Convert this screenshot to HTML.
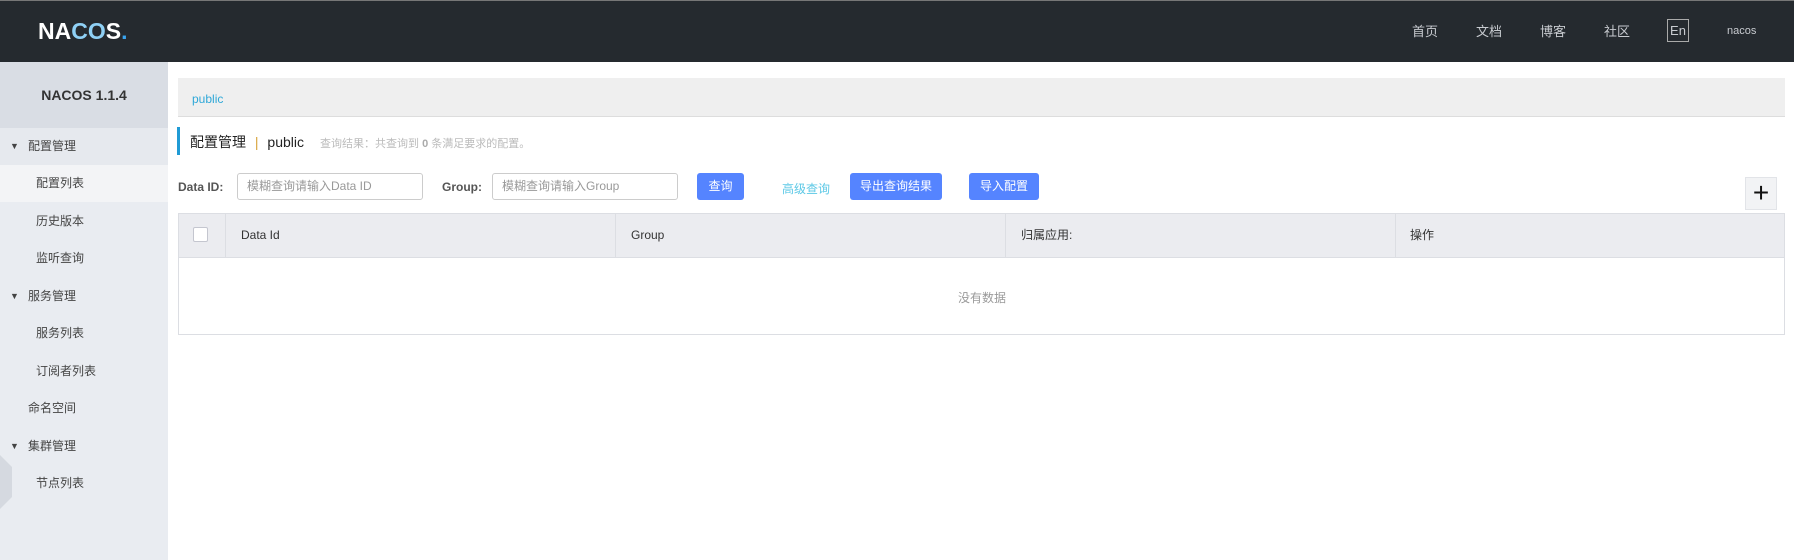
<!DOCTYPE html>
<html><head><meta charset="utf-8">
<style>
*{box-sizing:border-box;margin:0;padding:0}
body{width:1794px;height:560px;overflow:hidden;background:#fff;font-family:"Liberation Sans","Noto Sans CJK SC",sans-serif;font-size:12px;color:#333;position:relative}
.abs{position:absolute}
.hdr{left:0;top:0;width:1794px;height:62px;background:#252a2f;border-top:1px solid #777}
.logo{left:38px;top:18px;color:#fff;font-size:23px;font-weight:bold;letter-spacing:0px}
.nav{color:#c8cbd0;font-size:13px;top:21px}
.side{left:0;top:62px;width:168px;height:498px;background:#e9ecf1}
.ver{left:0;top:62px;width:168px;height:66px;background:#d9dde4;text-align:center;line-height:66px;font-weight:bold;font-size:14px;color:#333}
.it{left:0;width:168px;height:37px;line-height:37px;font-size:12px;color:#444}
.btn{background:#5584ff;color:#fff;border-radius:3px;text-align:center;line-height:27px;height:27px;top:173px;font-size:12px}
.inp{top:173px;height:27px;border:1px solid #ccc;border-radius:3px;padding-left:9px;line-height:25px;color:#999;font-size:12px}
.th{top:214px;height:43px;line-height:43px;font-size:12px;color:#333}
.vd{top:214px;width:1px;height:43px;background:#dcdee3}
</style></head><body>
<div class="abs hdr"></div>
<div class="abs logo">NA<span style="color:#8fd0f5">CO</span>S<span style="color:#3aa5f0">.</span></div>
<div class="abs nav" style="left:1412px">首页</div>
<div class="abs nav" style="left:1476px">文档</div>
<div class="abs nav" style="left:1540px">博客</div>
<div class="abs nav" style="left:1604px">社区</div>
<div class="abs nav" style="left:1667px;top:19px;border:1px solid #aaa;width:22px;height:23px;text-align:center;line-height:21px;font-size:13px">En</div>
<div class="abs nav" style="left:1727px;top:25px;font-size:11px">nacos</div>

<div class="abs side"></div>
<div class="abs ver">NACOS 1.1.4</div>
<div class="abs it" style="top:128px;background:#e6e9ee;padding-left:28px"><span class="abs" style="left:10px;top:0;font-size:9px">▼</span>配置管理</div>
<div class="abs it" style="top:165px;background:#f3f4f6;padding-left:36px">配置列表</div>
<div class="abs it" style="top:203px;padding-left:36px">历史版本</div>
<div class="abs it" style="top:240px;padding-left:36px">监听查询</div>
<div class="abs it" style="top:278px;padding-left:28px"><span class="abs" style="left:10px;top:0;font-size:9px">▼</span>服务管理</div>
<div class="abs it" style="top:315px;padding-left:36px">服务列表</div>
<div class="abs it" style="top:353px;padding-left:36px">订阅者列表</div>
<div class="abs it" style="top:390px;padding-left:28px">命名空间</div>
<div class="abs it" style="top:428px;padding-left:28px"><span class="abs" style="left:10px;top:0;font-size:9px">▼</span>集群管理</div>
<div class="abs it" style="top:465px;padding-left:36px">节点列表</div>
<svg class="abs" style="left:0;top:455px" width="14" height="55"><polygon points="0,0 12,12 12,42 0,54" fill="#d5d9e0"/></svg>

<div class="abs" style="left:178px;top:78px;width:1607px;height:39px;background:#efefef;border-bottom:1px solid #ddd"></div>
<div class="abs" style="left:192px;top:92px;color:#2fa8d8;font-size:12px">public</div>
<div class="abs" style="left:177px;top:127px;width:3px;height:28px;background:#209bd5"></div>
<div class="abs" style="left:190px;top:132px;font-size:14px;color:#222">配置管理 <span style="color:#d8a33c;margin:0 5px">|</span> public</div>
<div class="abs" style="left:320px;top:135px;font-size:11px;color:#bbb">查询结果：共查询到 <b style="color:#aaa">0</b> 条满足要求的配置。</div>

<div class="abs" style="left:178px;top:180px;font-weight:bold;font-size:12px;color:#555">Data ID:</div>
<div class="abs inp" style="left:237px;width:186px">模糊查询请输入Data ID</div>
<div class="abs" style="left:442px;top:180px;font-weight:bold;font-size:12px;color:#555">Group:</div>
<div class="abs inp" style="left:492px;width:186px">模糊查询请输入Group</div>
<div class="abs btn" style="left:697px;width:47px">查询</div>
<div class="abs" style="left:782px;top:180px;color:#5cc8e6">高级查询</div>
<div class="abs btn" style="left:850px;width:92px">导出查询结果</div>
<div class="abs btn" style="left:969px;width:70px">导入配置</div>
<div class="abs" style="left:1745px;top:177px;width:32px;height:33px;background:#f2f3f5;border:1px solid #e2e4e8;text-align:center;line-height:30px;font-size:28px;color:#111;font-weight:300">+</div>

<div class="abs" style="left:178px;top:213px;width:1607px;height:122px;border:1px solid #dcdee3"></div>
<div class="abs" style="left:178px;top:213px;width:1607px;height:45px;background:#ebecf0;border:1px solid #dcdee3"></div>
<div class="abs" style="left:193px;top:227px;width:15px;height:15px;border:1px solid #c4c6cf;border-radius:2px;background:#fff"></div>
<div class="abs vd" style="left:225px"></div>
<div class="abs vd" style="left:615px"></div>
<div class="abs vd" style="left:1005px"></div>
<div class="abs vd" style="left:1395px"></div>
<div class="abs th" style="left:241px">Data Id</div>
<div class="abs th" style="left:631px">Group</div>
<div class="abs th" style="left:1021px">归属应用:</div>
<div class="abs th" style="left:1410px">操作</div>
<div class="abs" style="left:958px;top:289px;color:#999">没有数据</div>
</body></html>
